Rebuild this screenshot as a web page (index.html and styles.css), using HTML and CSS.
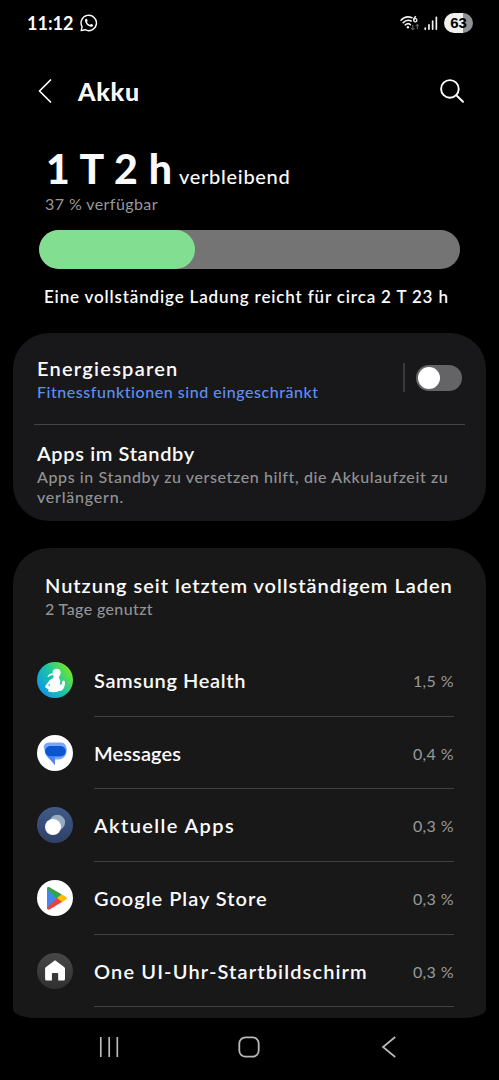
FILE: index.html
```html
<!DOCTYPE html>
<html lang="de">
<head>
<meta charset="utf-8">
<title>Akku</title>
<link rel="stylesheet" href="styles.css">
</head>
<body>
<div class="screen">
  <div class="status">
    <span class="clock">11:12</span>
    <svg class="whatsapp" width="18" height="18" viewBox="0 0 18 18" fill="none">
      <path d="M1.2 16.6 2.1 12.8A7.7 7.7 0 1 1 5.1 15.7Z" stroke="#fff" stroke-width="1.4" stroke-linejoin="round"/>
      <path d="M5.9 4.8c-.7.4-1.1 1.3-.8 2.4.7 2.8 3 5 5.600 5.600 1.100.2 2.100-.3 2.400-1.200.1-.4 0-.7-.3-.9l-1.400-.7c-.4-.2-.6-.1-.8.2l-.6.7C8.500 10.300 7.500 9.300 6.900 8l.6-.7c.2-.2.200-.5.1-.7L7 5.100c-.2-.4-.6-.5-1.100-.3Z" fill="#fff"/>
    </svg>
    <div class="status-right">
      <svg width="20" height="18" viewBox="0 0 20 18" fill="none">
        <g stroke="#f2f2f2" stroke-width="1.500" stroke-linecap="round">
          <path d="M1 6.200C4 3 8.500 2.300 12 3.800"/>
          <path d="M3.200 8.600C5.300 6.500 8.600 5.900 11.200 7"/>
          <path d="M5.300 10.900C6.700 9.600 9 9.400 10.500 10.700"/>
        </g>
        <circle cx="7.900" cy="13.300" r="1.200" fill="#f2f2f2"/>
        <path d="M16 2.300c-1.500.7-2.300 2-2.200 3.900" stroke="#f2f2f2" stroke-width="1.300"/>
        <circle cx="15.300" cy="6.200" r="1.600" stroke="#f2f2f2" stroke-width="1.300"/>
        <path d="M12.800 11v4.800M11.100 14.100l1.700 1.700 1.700-1.700M17.300 15.200v-4.800M15.700 12.100l1.600-1.700 1.600 1.700" stroke="#777" stroke-width="1"/>
      </svg>
      <svg class="signal" width="14" height="15" viewBox="0 0 14 15" fill="#f2f2f2">
        <rect x=".4" y="11.200" width="1.700" height="2.800" rx=".8"/>
        <rect x="4.100" y="8" width="1.700" height="6" rx=".8"/>
        <rect x="7.800" y="4.300" width="1.700" height="9.700" rx=".8"/>
        <rect x="11.500" y=".6" width="1.700" height="13.400" rx=".8"/>
      </svg>
      <span class="battery">63</span>
    </div>
  </div>

  <header class="header">
    <svg width="16" height="26" viewBox="0 0 16 26" fill="none" stroke="#fff" stroke-width="1.700" stroke-linecap="round" stroke-linejoin="round"><path d="M13.500 2 2.500 13l11 11"/></svg>
    <h1 class="title">Akku</h1>
    <svg class="search" width="26" height="26" viewBox="0 0 26 26" fill="none" stroke="#fff" stroke-width="1.900" stroke-linecap="round"><circle cx="10.900" cy="10.900" r="8.800"/><path d="m17.300 17.300 6.700 6.500"/></svg>
  </header>

  <section class="summary">
    <div class="remaining"><span class="time">1 T 2 h</span><span class="left">verbleibend</span></div>
    <div class="available">37 % verfügbar</div>
    <div class="bar"><div class="fill" style="width:37%"></div></div>
    <div class="estimate">Eine vollständige Ladung reicht für circa 2 T 23 h</div>
  </section>

  <section class="card options">
    <div class="option saver">
      <div class="option-text">
        <div class="label saver-label">Energiesparen</div>
        <div class="sub blue">Fitnessfunktionen sind eingeschränkt</div>
      </div>
      <div class="separator"></div>
      <div class="switch"><div class="knob"></div></div>
    </div>
    <div class="option standby">
      <div class="label">Apps im Standby</div>
      <div class="sub">Apps in Standby zu versetzen hilft, die Akkulaufzeit zu<br><span class="second">verlängern.</span></div>
    </div>
  </section>

  <section class="card usage">
    <div class="usage-head">
      <div class="label usage-label">Nutzung seit letztem vollständigem Laden</div>
      <div class="sub used">2 Tage genutzt</div>
    </div>
    <div class="app">
      <svg class="icon" viewBox="0 0 36 36">
        <defs><linearGradient id="health" x1=".1" y1=".75" x2=".9" y2=".2"><stop offset="0" stop-color="#109be0"/><stop offset=".5" stop-color="#1bc6a6"/><stop offset="1" stop-color="#72e529"/></linearGradient></defs>
        <circle cx="18" cy="18" r="18" fill="url(#health)"/>
        <path d="M10.300 14.700c1-2 2.600-3.200 5.200-3.500l1 1.900c-1.800 0-3.500.6-5.100 2Z" fill="#fff"/>
        <circle cx="19.600" cy="10.800" r="4" fill="#fff"/>
        <path d="M16.800 13h5.500c0 1.400-.5 2.500-.2 3.600 1.600 1.100 1.300 3.500.8 6.200 1.200.3 2-.4 2.400-1.500l-.5-1.600 1.700-1.200 1.300.7c.7 3.300-.6 7.200-2.700 9-1.200.8-2.700.9-4 .5l.1.900c-3.400 1.100-7.200.9-10-.4l.3-2.200c-1.300-.4-2.700-1.100-3.400-2 .3-1.900 2.500-3.800 4.200-6.200 1-1.200 2.200-2 3.900-2.500Z" fill="#fff"/>
        <path d="m12.600 21-1.500 2.600 1.500.9Z" fill="#1db7bf"/>
      </svg>
      <div class="app-body"><span class="name health-name">Samsung Health</span><span class="percent">1,5 %</span></div>
    </div>
    <div class="app">
      <svg class="icon" viewBox="0 0 36 36">
        <circle cx="18" cy="18" r="18" fill="#fff"/>
        <path d="M13 7.600h11c3.400 0 5.700 3 5.700 6.800v1.200c0 4.900-3.500 9-8.200 9H18v5.500L12.700 24C9.500 21.600 7.700 18 7.400 14.500 5.500 10.500 8 7.600 13 7.600Z" fill="#7ba5fa"/>
        <path d="M13.500 11h9.700c3.300 0 5.500 2.300 5.500 5.300s-2.200 5.200-5.500 5.200h-9.700c-3 0-5.400-2.200-5.400-5.200S10.500 11 13.500 11Z" fill="#0957d0"/>
        <path d="M8.500 18.200c1.100 2.100 2.900 3.300 5 3.300H18v8.600L12.600 24a12 12 0 0 1-4.100-5.800Z" fill="#4f85ec"/>
      </svg>
      <div class="app-body"><span class="name messages-name">Messages</span><span class="percent">0,4 %</span></div>
    </div>
    <div class="app">
      <svg class="icon" viewBox="0 0 36 36">
        <defs><linearGradient id="recent" x1="0" y1="0" x2="0" y2="1"><stop offset="0" stop-color="#405a89"/><stop offset="1" stop-color="#304066"/></linearGradient></defs>
        <circle cx="18" cy="18" r="18" fill="url(#recent)"/>
        <circle cx="20.300" cy="15.600" r="7.800" fill="#96acc2"/>
        <circle cx="16" cy="20" r="8" fill="#fff"/>
      </svg>
      <div class="app-body"><span class="name recent-name">Aktuelle Apps</span><span class="percent">0,3 %</span></div>
    </div>
    <div class="app">
      <svg class="icon" viewBox="0 0 36 36">
        <circle cx="18" cy="18" r="18" fill="#fff"/>
        <path d="M10 7.900v21l11-10.600Z" fill="#4484f3"/>
        <path d="M10 8.500c.1-1.400 1.300-1.800 2.500-1.200L25 14.600l-5 4.600-9.500-9.500Z" fill="#34a351"/>
        <path d="m24.700 14.300 4.100 2.400c1.400.8 1.400 2.300 0 3.100l-4.100 2.400-4.900-3.900Z" fill="#fbbb06"/>
        <path d="m20 17.900 5 4.100-12.500 7.500c-1.200.7-2.400 0-2.500-1.400Z" fill="#e94436"/>
      </svg>
      <div class="app-body"><span class="name play-name">Google Play Store</span><span class="percent">0,3 %</span></div>
    </div>
    <div class="app">
      <svg class="icon" viewBox="0 0 36 36">
        <defs><linearGradient id="home" x1="0" y1="0" x2="0" y2="1"><stop offset="0" stop-color="#474747"/><stop offset="1" stop-color="#303030"/></linearGradient></defs>
        <circle cx="18" cy="18" r="18" fill="url(#home)"/>
        <path d="M17 7.900c.7-.5 1.400-.5 2.100 0l8 6c.6.5.9 1 .9 1.700v10.500c0 .9-.6 1.500-1.500 1.500h-5.300v-6.700c0-.5-.3-.9-.9-.9h-4.500c-.6 0-.9.4-.9.900v6.700H9.600c-.9 0-1.500-.6-1.500-1.500V15.600c0-.7.3-1.200.9-1.700Z" fill="#fff"/>
      </svg>
      <div class="app-body"><span class="name home-name">One UI-Uhr-Startbildschirm</span><span class="percent">0,3 %</span></div>
    </div>
  </section>

  <nav class="nav">
    <svg width="22" height="22" viewBox="0 0 22 22" stroke="#b9b9b9" stroke-width="1.700"><path d="M2.800 1v20M11.200 1v20M19.300 1v20"/></svg>
    <svg width="22" height="22" viewBox="0 0 22 22" fill="none" stroke="#b9b9b9" stroke-width="1.800"><rect x="1.300" y="1.300" width="19.400" height="19.400" rx="6.200"/></svg>
    <svg width="22" height="22" viewBox="0 0 22 22" fill="none" stroke="#b9b9b9" stroke-width="1.700"><path d="M18.200 1 6 11l12.200 10"/></svg>
  </nav>
</div>
</body>
</html>
```
FILE: styles.css
```css
* { box-sizing: border-box; }

body {
  margin: 0;
  background: #000;
  color: #fbfbfb;
  font-family: Lato, "Open Sans", sans-serif;
}

svg { display: block; flex: none; }

.screen {
  width: 499px;
  height: 1080px;
  display: flex;
  flex-direction: column;
  overflow: hidden;
  white-space: nowrap;
}

.status {
  height: 46px;
  padding: 0 26px 0 27px;
  display: flex;
  align-items: center;
}
.clock { width: 53px; font-size: 18px; font-weight: 700; }
.status-right { margin-left: auto; display: flex; align-items: center; }
.signal { margin: 0 6px 0 4px; }
.battery {
  width: 29px;
  height: 20px;
  border-radius: 10px;
  background: linear-gradient(90deg, #f0f0f0 64%, #929292 64%);
  color: #000;
  font-family: "Liberation Sans", sans-serif;
  font-size: 15px;
  font-weight: 700;
  line-height: 20px;
  text-align: center;
}

.header {
  height: 90px;
  padding: 0 34px 0 37px;
  display: flex;
  align-items: center;
}
.title { margin: 0 0 0 25px; font-size: 25px; font-weight: 900; letter-spacing: .7px; }
.search { margin-left: auto; }

.summary { height: 197px; padding: 7px 39px 0; }
.remaining { height: 51px; padding-left: 7px; display: flex; align-items: baseline; line-height: 51px; }
.time { width: 133px; font-size: 41px; font-weight: 900; word-spacing: 2px; letter-spacing: -.4px; }
.left { font-size: 20px; font-weight: 500; letter-spacing: .7px; }
.available { height: 20px; padding-left: 6px; font-size: 16px; line-height: 20px; letter-spacing: .42px; color: #999; }
.bar { height: 39px; margin-top: 16px; border-radius: 20px; background: #747474; overflow: hidden; }
.fill { height: 100%; border-radius: 20px; background: #82df91; }
.estimate { margin-top: 17px; padding-left: 5px; font-size: 17px; font-weight: 600; line-height: 22px; letter-spacing: .84px; }

.card { margin: 0 13px; flex: none; border-radius: 36px; background: #18181a; }

.label { font-size: 20px; font-weight: 600; line-height: 26px; letter-spacing: .63px; }
.sub { font-size: 16px; font-weight: 500; line-height: 20px; letter-spacing: .6px; color: #929294; }

.options { height: 188px; padding: 0 21px; }
.option { padding: 0 3px; }
.saver { height: 92px; padding-top: 22px; display: flex; border-bottom: 1px solid #444446; }
.option-text { flex: 1; }
.saver-label { letter-spacing: 1.25px; }
.blue { padding-top: 1px; color: #5d8ff2; letter-spacing: .54px; }
.separator { width: 2px; height: 29px; margin: 8px 11px 0 0; background: #39393b; }
.switch { width: 46px; height: 26px; margin-top: 10px; padding: 2px; border-radius: 13px; background: #646467; }
.knob { width: 22px; height: 22px; border-radius: 11px; background: #fff; }
.standby { padding-top: 15px; }
.standby .sub { padding-top: 1px; }
.second { letter-spacing: .78px; }

.usage {
  height: 470px;
  margin-top: 27px;
  padding: 24px 32px 0 24px;
  border-radius: 36px 36px 22px 22px / 36px 36px 9px 9px;
  background: #181818;
}
.usage-head { height: 72px; padding-left: 8px; }
.usage-label { letter-spacing: .97px; }
.used { line-height: 22px; letter-spacing: .38px; }

.app { height: 72.7px; display: flex; gap: 21px; }
.icon { width: 36px; height: 36px; margin-top: 18px; }
.app-body {
  flex: 1;
  display: flex;
  justify-content: space-between;
  align-items: center;
  border-bottom: 1px solid #404040;
}
.name { padding-top: 0; font-size: 20px; font-weight: 600; letter-spacing: .63px; }
.messages-name { letter-spacing: .1px; }
.recent-name { letter-spacing: 1.4px; }
.play-name { letter-spacing: 1px; }
.home-name { letter-spacing: 1.13px; }
.percent { padding-top: 1px; font-size: 16px; letter-spacing: .4px; color: #999; }

.nav { height: 58px; padding: 0 100px 0 98px; display: flex; align-items: center; justify-content: space-between; }
```
